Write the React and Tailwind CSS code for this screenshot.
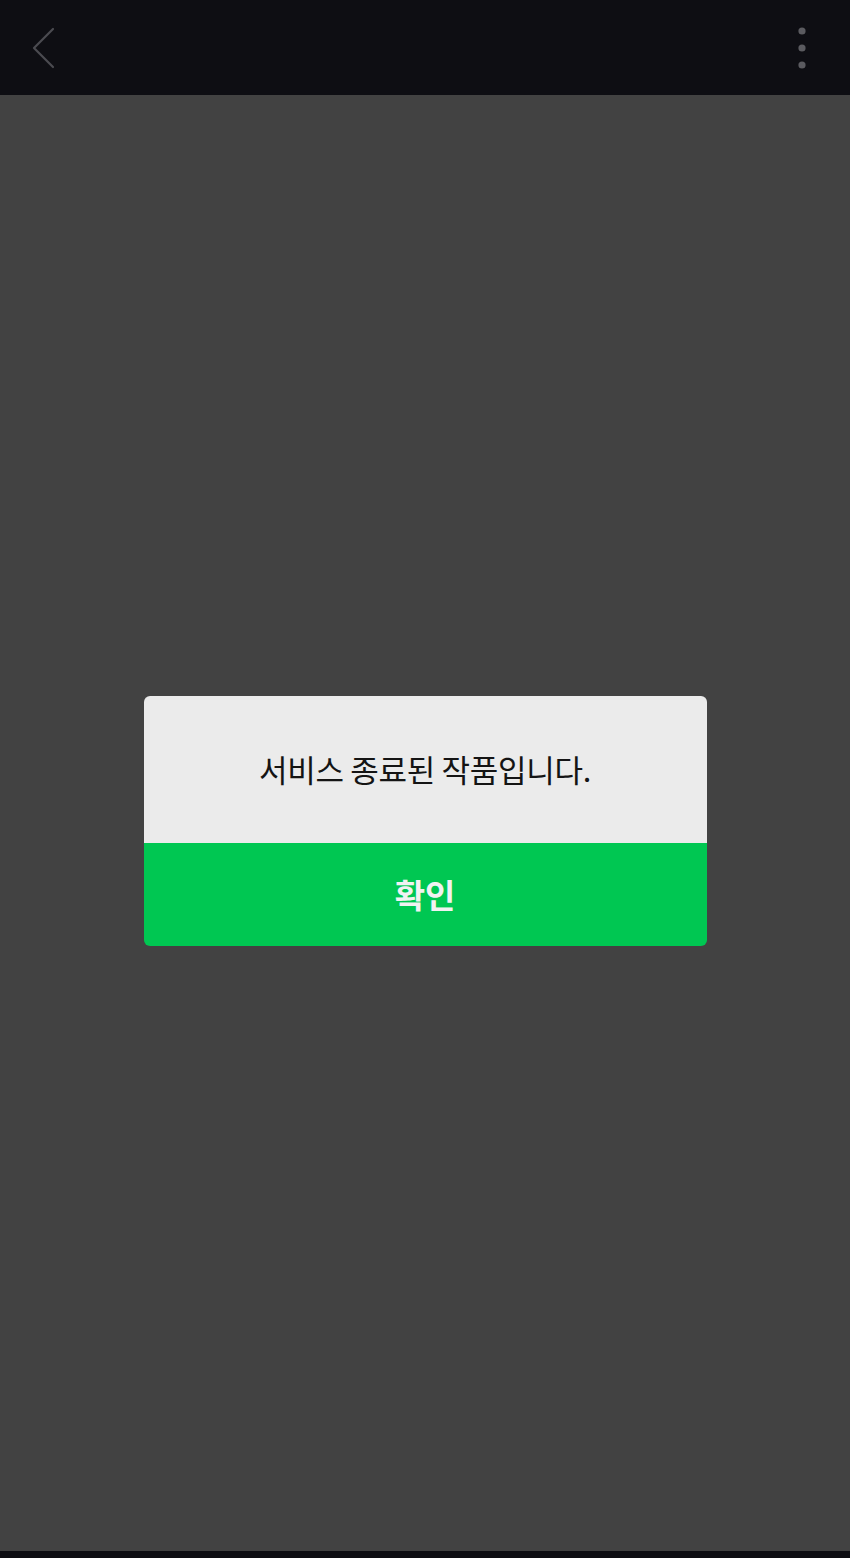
const FONT = { fontFamily: '"Noto Sans CJK KR", "Noto Sans", sans-serif' };

const BackIcon = () => (
  <svg width="30" height="48" viewBox="0 0 30 48" fill="none">
    <path d="M25 5 L6 24 L25 43" stroke="#4b4b50" strokeWidth="2.2" strokeLinecap="round" strokeLinejoin="round" />
  </svg>
);

const MoreIcon = () => (
  <svg width="12" height="46" viewBox="0 0 12 46" fill="#5b5b60">
    <circle cx="6" cy="6" r="3.6" />
    <circle cx="6" cy="23" r="3.6" />
    <circle cx="6" cy="40" r="3.6" />
  </svg>
);

export default function App() {
  return (
    <div className="flex flex-col h-[1558px] w-full bg-[#424242]" style={FONT}>
      {/* top bar */}
      <header className="h-[95px] shrink-0 bg-[#0e0e13] flex items-center justify-between pl-[28px] pr-[42px]">
        <BackIcon />
        <MoreIcon />
      </header>

      {/* body with dialog */}
      <main className="flex-1 flex items-center justify-center pb-[4px]">
        <div className="w-[563px] rounded-[6px] overflow-hidden">
          <div className="h-[147px] bg-[#ebebeb] flex items-center justify-center pb-[2px]">
            <p className="text-[31px] leading-none text-[#141414] tracking-[-0.3px]">서비스 종료된 작품입니다.</p>
          </div>
          <button className="w-full h-[103px] bg-[#00c752] flex items-center justify-center text-[33px] leading-none font-bold text-[#f2f2f2]">
            확인
          </button>
        </div>
      </main>

      <div className="h-[7px] shrink-0 bg-[#0e0e13]" />
    </div>
  );
}
